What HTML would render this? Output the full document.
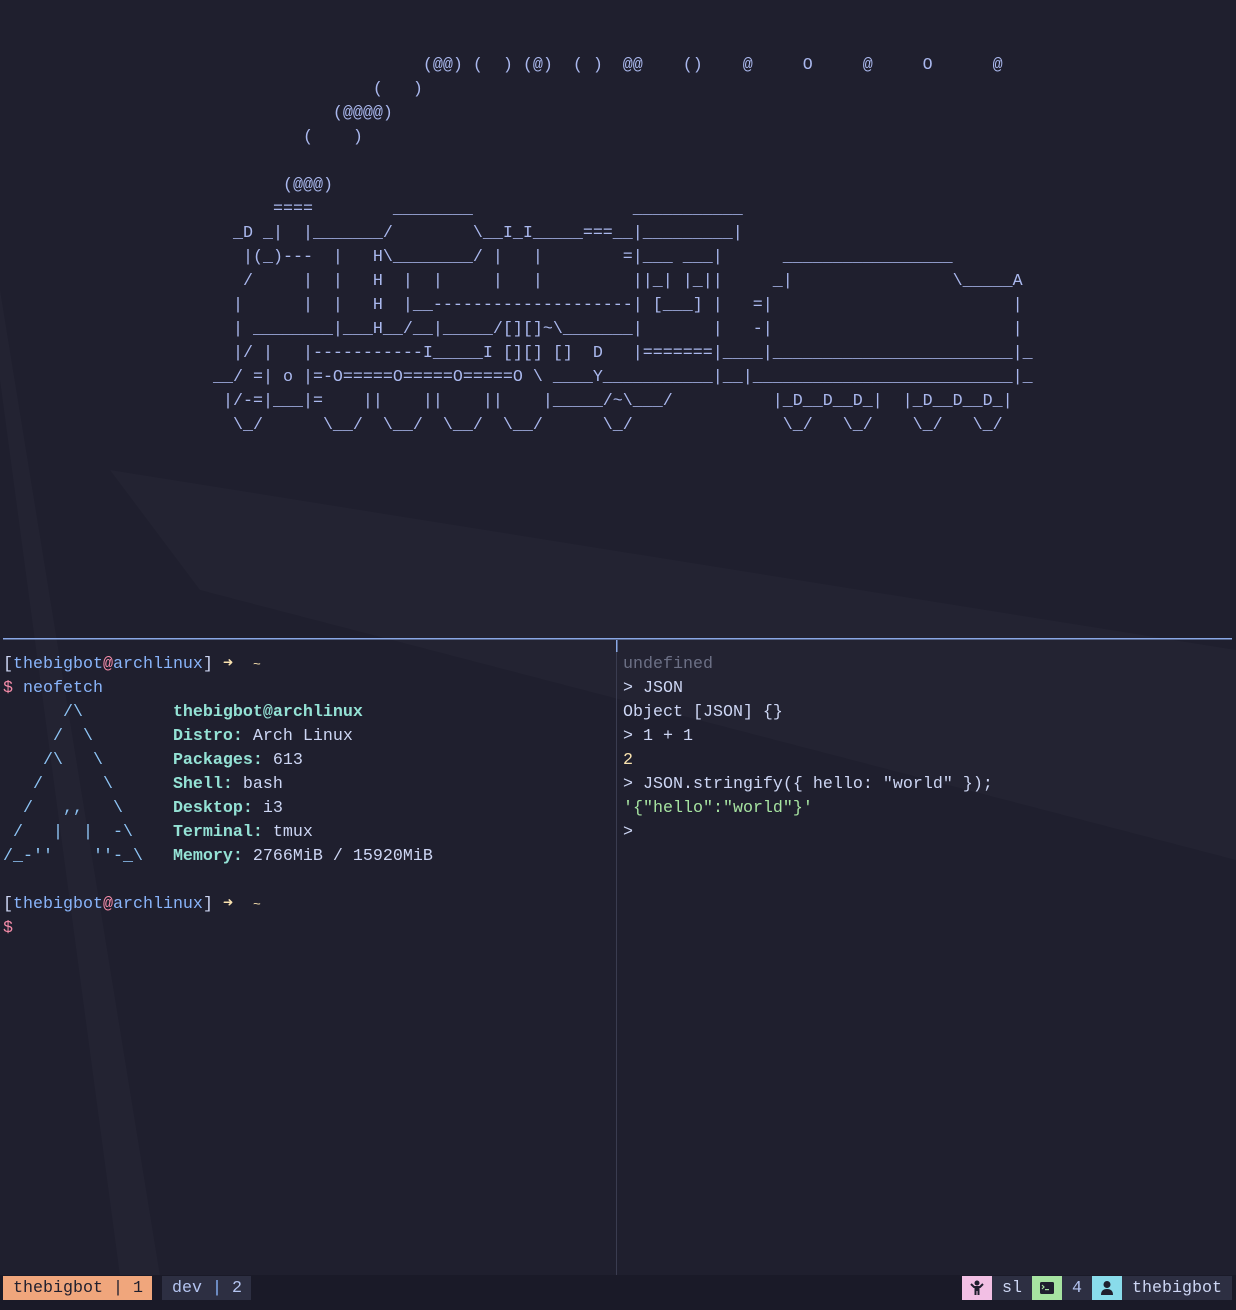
<!DOCTYPE html>
<html><head><meta charset="utf-8"><style>
*{margin:0;padding:0;box-sizing:border-box}
body{width:1236px;height:1310px;background:#1f1f2e;overflow:hidden;position:relative;font-family:"Liberation Mono",monospace;font-size:16.67px;line-height:24px}
pre{font-family:inherit;font-size:inherit;line-height:24px;position:absolute;white-space:pre}
.tr{left:193px;top:54px;color:#aab8ee}
.b{color:#89b4fa}.r{color:#f38ba8}.y{color:#f9e2af}.w{color:#cdd6f4}.t{color:#94e2d5;font-weight:bold}.g{color:#a6e3a1}.gr{color:#6c7086}.lb{color:#8ec4f5}
.blk{position:absolute;top:1276px;height:24px;line-height:26px;white-space:pre}
</style></head><body>
<svg width="1236" height="1310" style="position:absolute;left:0;top:0">
<polygon points="0,290 0,380 120,1276 160,1276" fill="#ffffff" opacity="0.018"/>
<polygon points="110,470 1236,650 1236,860 200,590" fill="#ffffff" opacity="0.018"/>
<rect x="0" y="1275" width="1236" height="35" fill="#1a1a28"/>
<rect x="3" y="638" width="1229" height="1.5" fill="#8aa8e6"/>
<rect x="616" y="640" width="1" height="635" fill="#3a3c50"/>
<rect x="616" y="640" width="1.5" height="12" fill="#8aa8e6"/>
</svg>
<pre class="tr">                       (@@) (  ) (@)  ( )  @@    ()    @     O     @     O      @
                  (   )
              (@@@@)
           (    )

         (@@@)
        ====        ________                ___________
    _D _|  |_______/        \__I_I_____===__|_________|
     |(_)---  |   H\________/ |   |        =|___ ___|      _________________
     /     |  |   H  |  |     |   |         ||_| |_||     _|                \_____A
    |      |  |   H  |__--------------------| [___] |   =|                        |
    | ________|___H__/__|_____/[][]~\_______|       |   -|                        |
    |/ |   |-----------I_____I [][] []  D   |=======|____|________________________|_
  __/ =| o |=-O=====O=====O=====O \ ____Y___________|__|__________________________|_
   |/-=|___|=    ||    ||    ||    |_____/~\___/          |_D__D__D_|  |_D__D__D_|
    \_/      \__/  \__/  \__/  \__/      \_/               \_/   \_/    \_/   \_/</pre>
<pre style="left:3px;top:653px" class="w">[<span class="b">thebigbot</span><span class="r">@</span><span class="b">archlinux</span>] <span class="y">➜</span>  <span class="y" style="font-size:13px">~</span>
<span class="r">$</span> <span class="b">neofetch</span>
<span class="lb">      /\</span>         <span class="t">thebigbot@archlinux</span>
<span class="lb">     /  \</span>        <span class="t">Distro:</span> Arch Linux
<span class="lb">    /\   \</span>       <span class="t">Packages:</span> 613
<span class="lb">   /      \</span>      <span class="t">Shell:</span> bash
<span class="lb">  /   ,,   \</span>     <span class="t">Desktop:</span> i3
<span class="lb"> /   |  |  -\</span>    <span class="t">Terminal:</span> tmux
<span class="lb">/_-''    ''-_\</span>   <span class="t">Memory:</span> 2766MiB / 15920MiB

[<span class="b">thebigbot</span><span class="r">@</span><span class="b">archlinux</span>] <span class="y">➜</span>  <span class="y" style="font-size:13px">~</span>
<span class="r">$</span></pre>
<pre style="left:623px;top:653px" class="w"><span class="gr">undefined</span>
&gt; JSON
Object [JSON] {}
&gt; 1 + 1
<span class="y">2</span>
&gt; JSON.stringify({ hello: "world" });
<span class="g">'{"hello":"world"}'</span>
&gt;</pre>
<div class="blk" style="left:3px;width:149px;background:#f0a67c;color:#1f1f2e;padding-left:10px">thebigbot | 1</div>
<div class="blk" style="left:162px;width:89px;background:#2d2f42;color:#b4c4f0;padding-left:10px">dev <span style="color:#89b4fa">|</span> 2</div>
<div class="blk" style="left:962px;width:30px;background:#f2bfe4"><svg width="30" height="24"><circle cx="15" cy="7" r="2.5" fill="#1f1f2e"/><path d="M9 8 L12 11 L18 11 L21 8" stroke="#1f1f2e" stroke-width="2" fill="none"/><rect x="12.5" y="10" width="5" height="5" fill="#1f1f2e"/><rect x="12.5" y="14" width="2" height="5" fill="#1f1f2e"/><rect x="15.5" y="14" width="2" height="5" fill="#1f1f2e"/></svg></div>
<div class="blk" style="left:992px;width:40px;background:#2d2f42;color:#cdd6f4;padding-left:10px">sl</div>
<div class="blk" style="left:1032px;width:30px;background:#a6e3a1"><svg width="30" height="24"><rect x="8" y="6" width="14" height="12" rx="1.5" fill="#1f1f2e"/><path d="M10 9 L12 11 L10 13" stroke="#a6e3a1" stroke-width="1.2" fill="none"/><rect x="13" y="13" width="4" height="1.2" fill="#a6e3a1"/></svg></div>
<div class="blk" style="left:1062px;width:30px;background:#2d2f42;color:#b4c4f0;padding-left:10px">4</div>
<div class="blk" style="left:1092px;width:30px;background:#89dceb"><svg width="30" height="24"><circle cx="15" cy="8.5" r="3.5" fill="#1f1f2e"/><path d="M9 19 Q9 13 15 13 Q21 13 21 19 Z" fill="#1f1f2e"/></svg></div>
<div class="blk" style="left:1122px;width:110px;background:#2d2f42;color:#cdd6f4;padding-left:10px">thebigbot</div>
</body></html>
